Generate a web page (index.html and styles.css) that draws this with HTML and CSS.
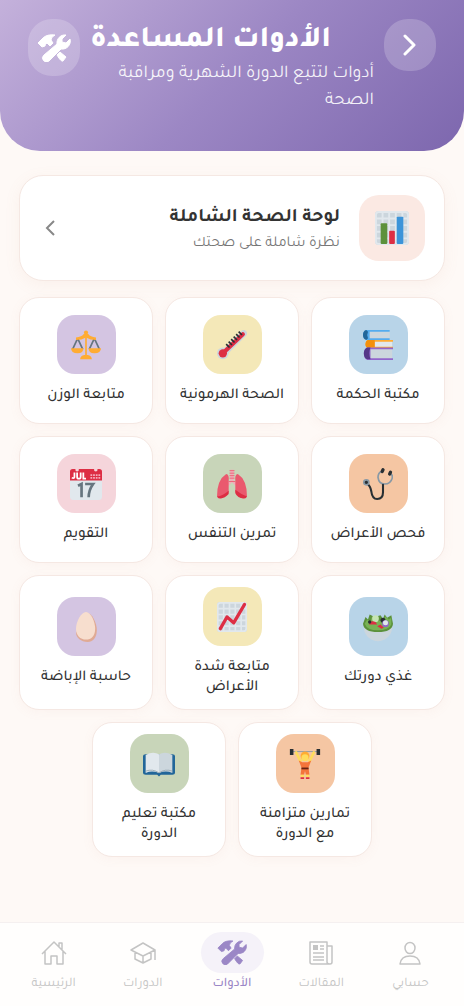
FILE: index.html
```html
<!DOCTYPE html>
<html lang="ar" dir="rtl">
<head>
    <meta charset="UTF-8">
    <meta name="viewport" content="width=device-width, initial-scale=1.0">
    <title>الأدوات المساعدة</title>
    <link rel="stylesheet" href="styles.css">
</head>
<body>
    <!-- Shared icon shapes -->
    <svg class="sprite" aria-hidden="true">
        <symbol id="tools" viewBox="0 0 34 28">
            <g fill="currentColor" stroke="currentColor" stroke-width="1" stroke-linejoin="round">
                <path d="M1 9L6 4Q10 0 18 1Q14 3 14 6L16 9L13 12L10 9Q8 10 8 12L5 13Z"/>
                <path d="M29 1A8 8 0 0 0 20 10L7 21A3.8 3.8 0 0 0 12 27L24 15A8 8 0 0 0 33 5L29 9L25 8L25 5Z"/>
                <path d="M20 21L23 18L29 23L26 27Q24 28 20 21Z"/>
            </g>
        </symbol>
    </svg>

    <header>
        <button class="back-btn" type="button" aria-label="رجوع">
            <svg width="14" height="22" viewBox="0 0 14 22" fill="none" stroke="currentColor" stroke-width="3" stroke-linecap="round" stroke-linejoin="round"><path d="M2 2L11 11L2 20"/></svg>
        </button>
        <div class="header-text">
            <h1>الأدوات المساعدة</h1>
            <p>أدوات لتتبع الدورة الشهرية ومراقبة الصحة</p>
        </div>
        <div class="header-icon">
            <svg width="34" height="28"><use href="#tools"/></svg>
        </div>
    </header>

    <main>
        <a class="dashboard" href="#">
            <span class="tile peach">
                <svg width="34" height="34" viewBox="0 0 36 36">
                    <rect width="36" height="36" rx="4" fill="#ccd6dd"/>
                    <path d="M8 1v34M15 1v34M22 1v34M29 1v34M1 8h34M1 15h34M1 22h34M1 29h34" stroke="#e1e8ed" stroke-width="2"/>
                    <rect x="1" y="1" width="34" height="34" rx="3" fill="none" stroke="#e1e8ed" stroke-width="2"/>
                    <rect x="6" y="13" width="7" height="22" rx="1" fill="#5c913b"/>
                    <rect x="15" y="21" width="6" height="14" rx="1" fill="#dd2e44"/>
                    <rect x="23" y="6" width="7" height="29" rx="1" fill="#3b94d9"/>
                </svg>
            </span>
            <span class="dashboard-text">
                <strong>لوحة الصحة الشاملة</strong>
                <small>نظرة شاملة على صحتك</small>
            </span>
            <svg class="arrow" width="10" height="16" viewBox="0 0 10 16" fill="none" stroke="currentColor" stroke-width="2"><path d="M9 1L2 8L9 15"/></svg>
        </a>

        <nav class="tools" aria-label="الأدوات">
            <a class="card" href="#">
                <span class="tile blue">
                    <svg width="30" height="30" viewBox="0 0 36 36">
                        <path d="M4 1H32V11H4Z" fill="#ccd6dd"/>
                        <path d="M4 0H32V2H8V10H32V12H4Q0 11 0 6Q0 1 4 0Z" fill="#55acee"/>
                        <path d="M4 0Q0 1 0 6Q0 11 4 12L6 10Q4 6 6 2Z" fill="#226699"/>
                        <path d="M12 13H35V21H12Z" fill="#e1e8ed"/>
                        <path d="M6 12H36V14H14V20H36V22H6Q3 21 3 17Q3 13 6 12Z" fill="#ffac33"/>
                        <path d="M6 12H14V21H6Q3 21 3 17Q3 13 6 12Z" fill="#f4900c"/>
                        <path d="M8 22H35V35H8Z" fill="#ccd6dd"/>
                        <path d="M5 21H36V23H9V34H36V36H5Q1 34 1 28Q1 23 5 21Z" fill="#9266cc"/>
                        <path d="M5 21H9Q6 28 9 35H5Q1 34 1 28Q1 23 5 21Z" fill="#553788"/>
                    </svg>
                </span>
                <span>مكتبة الحكمة</span>
            </a>
            <a class="card" href="#">
                <span class="tile yellow">
                    <svg width="30" height="30" viewBox="0 0 36 36">
                        <path d="M7 29L32 4" stroke="#ccd6dd" stroke-width="8" stroke-linecap="round"/>
                        <circle cx="7" cy="28" r="7" fill="#ccd6dd"/>
                        <path d="M7 28L31 5" stroke="#dd2e44" stroke-width="5" stroke-linecap="round"/>
                        <circle cx="7" cy="28" r="5" fill="#dd2e44"/>
                        <path d="M11 17l4 4M14 14l4 4M17 11l4 4M20 8l4 4M23 5l4 4M26 2l4 4" stroke="#292f33" stroke-width="2"/>
                    </svg>
                </span>
                <span>الصحة الهرمونية</span>
            </a>
            <a class="card" href="#">
                <span class="tile purple">
                    <svg width="30" height="30" viewBox="0 0 36 36">
                        <path d="M8 10L2 23M8 10L14 23M28 10L22 23M28 10L34 23" stroke="#66757f" stroke-width="2"/>
                        <g fill="#ffac33">
                            <circle cx="18" cy="3" r="2.5"/>
                            <path d="M17 3H19V32H17Z"/>
                            <path d="M6 9Q13 8 15 5Q18 3 21 5Q23 8 30 9V12Q23 12 18 9Q13 12 6 12Z"/>
                            <path d="M0 22H15Q15 28 8 28Q0 28 0 22ZM21 22H36Q36 28 28 28Q21 28 21 22ZM11 35Q11 31 16 30H20Q25 31 25 35Z"/>
                        </g>
                    </svg>
                </span>
                <span>متابعة الوزن</span>
            </a>
            <a class="card" href="#">
                <span class="tile orange">
                    <svg width="30" height="34" viewBox="0 0 36 40" fill="none" stroke-linecap="round">
                        <path d="M22 5Q18 7 18 12Q19 20 26 20Q33 20 35 13Q36 9 33 8" stroke="#8899a6" stroke-width="2"/>
                        <path d="M4 19Q9 22 10 29Q11 38 17 38Q24 38 24 30V21" stroke="#292f33" stroke-width="2.5"/>
                        <path d="M23 5L24 3M32 8L33 6" stroke="#292f33" stroke-width="4"/>
                        <circle cx="4" cy="18" r="3" fill="#292f33" stroke="#8899a6" stroke-width="2"/>
                    </svg>
                </span>
                <span>فحص الأعراض</span>
            </a>
            <a class="card" href="#">
                <span class="tile green">
                    <svg width="30" height="30" viewBox="0 0 36 36">
                        <path d="M16 1H20V14L24 18L22 20L18 16L14 20L12 18L16 14Z" fill="#f4abba"/>
                        <path d="M15 2H21M15 5H21M15 8H21M15 11H21M14 15H22" stroke="#ea596e" stroke-width="1"/>
                        <path d="M11 6Q15 6 14 15V28Q11 32 6 35Q1 36 0 33Q0 13 11 6ZM25 6Q21 6 22 15V28Q25 32 30 35Q35 36 36 33Q36 13 25 6Z" fill="#ea596e"/>
                        <path d="M0 33Q7 32 14 26V30Q9 36 2 35ZM36 33Q28 30 22 25V29Q25 36 34 35Z" fill="#dd2e44"/>
                    </svg>
                </span>
                <span>تمرين التنفس</span>
            </a>
            <a class="card" href="#">
                <span class="tile pink">
                    <svg width="32" height="32" viewBox="0 0 36 36">
                        <path d="M0 12H36V32Q36 36 32 36H4Q0 36 0 32Z" fill="#e1e8ed"/>
                        <path d="M3 1H33Q36 1 36 4V14H0V4Q0 1 3 1Z" fill="#dd2e44"/>
                        <circle cx="8" cy="2" r="2" fill="#f5d5db"/>
                        <circle cx="29" cy="2" r="2" fill="#f5d5db"/>
                        <path d="M5 5V10Q5 12 2 11M8 5V10Q8 12 10 12Q12 12 12 10V5M15 5V12H18" fill="none" stroke="#fff" stroke-width="2"/>
                        <path d="M23 8H34M23 11H34" stroke="#f4abba" stroke-width="2" stroke-dasharray="2 1"/>
                        <path d="M9 20L13 18V33M17 18H26Q21 25 21 33" fill="none" stroke="#66757f" stroke-width="3"/>
                    </svg>
                </span>
                <span>التقويم</span>
            </a>
            <a class="card" href="#">
                <span class="tile blue">
                    <svg width="30" height="30" viewBox="0 0 36 36">
                        <path d="M1 17H35Q35 28 26 33Q18 37 10 33Q1 28 1 17Z" fill="#ccd6dd"/>
                        <path d="M0 14L3 6L6 9L8 3L14 6L21 4L24 8L26 3L29 7L34 4L36 14Q35 24 18 24Q1 24 0 14Z" fill="#5c913b"/>
                        <path d="M2 14L5 9L9 11L11 5L18 11L25 9L27 5L31 9L34 7L34 15Q31 22 18 22Q5 22 2 14Z" fill="#77b255"/>
                        <circle cx="15" cy="8" r="4" fill="#c6e5b3"/>
                        <path d="M7 15Q9 9 15 12L17 15Z" fill="#dd2e44"/>
                        <circle cx="24" cy="10" r="3" fill="#292f33"/>
                        <circle cx="8" cy="12" r="2" fill="#292f33"/>
                        <circle cx="27" cy="14" r="4" fill="#9266cc"/>
                        <circle cx="27" cy="13" r="3" fill="#e1e8ed"/>
                        <path d="M17 17L21 15L25 19L22 20Z" fill="#dd2e44"/>
                    </svg>
                </span>
                <span>غذي دورتك</span>
            </a>
            <a class="card" href="#">
                <span class="tile yellow">
                    <svg width="30" height="30" viewBox="0 0 36 36">
                        <rect width="36" height="36" rx="4" fill="#ccd6dd"/>
                        <path d="M8 1v34M15 1v34M22 1v34M29 1v34M1 8h34M1 15h34M1 22h34M1 29h34" stroke="#e1e8ed" stroke-width="2"/>
                        <rect x="1" y="1" width="34" height="34" rx="3" fill="none" stroke="#e1e8ed" stroke-width="2"/>
                        <path d="M4 32L12 18L20 25L33 3" fill="none" stroke="#dd2e44" stroke-width="4" stroke-linecap="round" stroke-linejoin="round"/>
                    </svg>
                </span>
                <span>متابعة شدة الأعراض</span>
            </a>
            <a class="card" href="#">
                <span class="tile purple">
                    <svg width="30" height="30" viewBox="0 0 36 36">
                        <path d="M19 1C25 1 31 13 31 22C31 31 26 36 20 36C12 36 6 31 6 25Z" fill="#e0aa94"/>
                        <path d="M18 0C24 0 29 12 29 20C29 29 24 33 18 33C11 33 6 28 6 20C6 12 12 0 18 0Z" fill="#f7dece"/>
                    </svg>
                </span>
                <span>حاسبة الإباضة</span>
            </a>
            <a class="card" href="#">
                <span class="tile orange">
                    <svg width="32" height="32" viewBox="0 0 36 36">
                        <path d="M3 4H33" stroke="#8899a6" stroke-width="1"/>
                        <path d="M1 1H5V8H1ZM31 1H35V8H31Z" fill="#292f33"/>
                        <path d="M8 5L13 15M28 5L23 15" stroke="#ffdc5d" stroke-width="3" stroke-linecap="round"/>
                        <path d="M11 14L15 16H21L25 14L22 22L23 30H19L18 26L17 30H13L14 22Z" fill="#f4743b"/>
                        <path d="M14 22H22V24H14Z" fill="#662113"/>
                        <circle cx="18" cy="9" r="5" fill="#ffac33"/>
                        <circle cx="18" cy="11" r="4" fill="#ffdc5d"/>
                        <path d="M13 30H17V33H13ZM19 30H23V33H19Z" fill="#ffdc5d"/>
                        <path d="M13 33H17V35H13ZM19 33H23V35H19Z" fill="#dd2e44"/>
                    </svg>
                </span>
                <span>تمارين متزامنة مع الدورة</span>
            </a>
            <a class="card" href="#">
                <span class="tile green">
                    <svg width="32" height="32" viewBox="0 0 36 36">
                        <path d="M0 9Q0 7 3 7H33Q36 7 36 9V28Q36 30 33 30H20L18 32L16 30H3Q0 30 0 28Z" fill="#226699"/>
                        <path d="M3 8Q11 3 18 7V28Q10 25 3 28Z" fill="#e1e8ed"/>
                        <path d="M33 8Q25 3 18 7V28Q26 25 33 28Z" fill="#ccd6dd"/>
                        <path d="M3 26Q11 23 18 28Q25 23 33 26" fill="none" stroke="#99aab5" stroke-width="1"/>
                    </svg>
                </span>
                <span>مكتبة تعليم الدورة</span>
            </a>
        </nav>
    </main>

    <nav class="bottom-nav" aria-label="التنقل الرئيسي">
        <a href="#">
            <span class="nav-icon">
                <svg width="24" height="26" viewBox="0 0 24 26" fill="none" stroke="currentColor" stroke-width="1.5" stroke-linejoin="round"><ellipse cx="12" cy="8" rx="5" ry="5.5"/><path d="M2 24Q3 16 12 16Q21 16 22 24Z"/></svg>
            </span>
            <span>حسابي</span>
        </a>
        <a href="#">
            <span class="nav-icon">
                <svg width="24" height="26" viewBox="0 0 24 26" fill="none" stroke="currentColor" stroke-width="1.5" stroke-linejoin="round"><path d="M21 24H3Q1 24 1 22V2H18V22Q18 24 21 24Q23 24 23 22V6H18M4 13H15M4 17H15M4 20H15M11 6H15M11 9H15"/><path d="M4 5H9V10H4Z" fill="currentColor" stroke="none"/></svg>
            </span>
            <span>المقالات</span>
        </a>
        <a class="active" href="#" aria-current="page">
            <span class="nav-icon">
                <svg width="30" height="25"><use href="#tools"/></svg>
            </span>
            <span>الأدوات</span>
        </a>
        <a href="#">
            <span class="nav-icon">
                <svg width="26" height="24" viewBox="0 0 26 24" fill="none" stroke="currentColor" stroke-width="1.5" stroke-linejoin="round"><path d="M13 2L25 9L13 15L1 9ZM5 11V18L13 22L21 18V11M13 15V22M25 9V19"/></svg>
            </span>
            <span>الدورات</span>
        </a>
        <a href="#">
            <span class="nav-icon">
                <svg width="26" height="26" viewBox="0 0 26 26" fill="none" stroke="currentColor" stroke-width="1.5" stroke-linejoin="round"><path d="M1 14L13 2L25 14M4 11V24H10V16H16V24H22V11M18 7V3H21V10"/></svg>
            </span>
            <span>الرئيسية</span>
        </a>
    </nav>
</body>
</html>
```

FILE: styles.css
```css
* {
    box-sizing: border-box;
}

body {
    font-family: Tajawal, "Noto Kufi Arabic", "DejaVu Sans", sans-serif;
    margin: 0;
    min-height: 100vh;
    background-color: #fef9f6;
    color: #333;
}

a {
    color: inherit;
    text-decoration: none;
}

svg {
    display: block;
}

.sprite {
    display: none;
}

header {
    display: flex;
    align-items: flex-start;
    gap: 10px;
    padding: 19px 28px 36px;
    border-radius: 0 0 40px 40px;
    background: linear-gradient(135deg, #c4b1db 0%, #9c87c4 50%, #7d67ae 100%);
    color: white;
}

.back-btn,
.header-icon {
    display: flex;
    flex: none;
    align-items: center;
    justify-content: center;
    width: 52px;
    height: 52px;
    padding: 0;
    border: none;
    border-radius: 24px;
    background-color: rgba(255, 255, 255, 0.2);
    color: white;
}

.back-btn {
    cursor: pointer;
}

.header-icon {
    height: 57px;
}

.header-text {
    flex: 1;
}

h1 {
    margin: 0;
    padding-top: 4px;
    font-size: 30px;
    font-weight: 800;
    line-height: 38px;
    text-align: left;
}

header p {
    margin: 0;
    font-size: 18px;
    line-height: 27px;
    opacity: 0.9;
}

main {
    padding: 24px 19px 100px;
}

.dashboard {
    display: flex;
    align-items: center;
    gap: 19px;
    padding: 19px;
    margin-bottom: 16px;
    border: 1px solid #f5e8e3;
    border-radius: 24px;
    background-color: white;
    box-shadow: 0 4px 16px rgba(200, 140, 120, 0.08);
}

.dashboard-text {
    flex: 1;
    padding-top: 5px;
}

.dashboard strong,
.dashboard small {
    display: block;
}

.dashboard strong {
    font-size: 19px;
    font-weight: 700;
    line-height: 26px;
}

.dashboard small {
    font-size: 15px;
    line-height: 24px;
    color: #777;
}

.arrow {
    margin-left: 6px;
    color: #888;
}

.tile {
    display: flex;
    flex: none;
    align-items: center;
    justify-content: center;
    width: 59px;
    height: 59px;
    border-radius: 18px;
}

.dashboard .tile {
    width: 66px;
    height: 66px;
    border-radius: 20px;
}

.peach { background-color: #fbe9e3; }
.blue { background-color: #b8d4e8; }
.yellow { background-color: #f4e8b8; }
.purple { background-color: #d4c5e2; }
.orange { background-color: #f5c6a3; }
.green { background-color: #c8d5b9; }
.pink { background-color: #f5d5db; }

.tools {
    display: flex;
    flex-wrap: wrap;
    justify-content: center;
    gap: 12px;
}

.card {
    display: flex;
    flex-direction: column;
    flex: 0 0 calc((100% - 24px) / 3);
    align-items: center;
    justify-content: center;
    gap: 12px;
    min-height: 127px;
    padding: 11px 12px;
    border: 1px solid #f5e8e3;
    border-radius: 20px;
    background-color: white;
    box-shadow: 0 2px 12px rgba(200, 140, 120, 0.06);
    font-size: 15px;
    font-weight: 500;
    line-height: 20px;
    text-align: center;
}

.bottom-nav {
    position: fixed;
    right: 0;
    bottom: 0;
    left: 0;
    display: flex;
    padding: 9px 9px 10px;
    border-top: 1px solid #f5f0f0;
    background-color: #fffefd;
    color: #c4c4c4;
}

.bottom-nav a {
    display: flex;
    flex: 1;
    flex-direction: column;
    align-items: center;
    font-size: 13px;
    line-height: 23px;
}

.nav-icon {
    display: flex;
    align-items: center;
    justify-content: center;
    width: 63px;
    height: 41px;
    border-radius: 21px;
}

.bottom-nav .active {
    color: #9b87c6;
    font-weight: 500;
}

.active .nav-icon {
    background-color: #f5f2f9;
}
```
